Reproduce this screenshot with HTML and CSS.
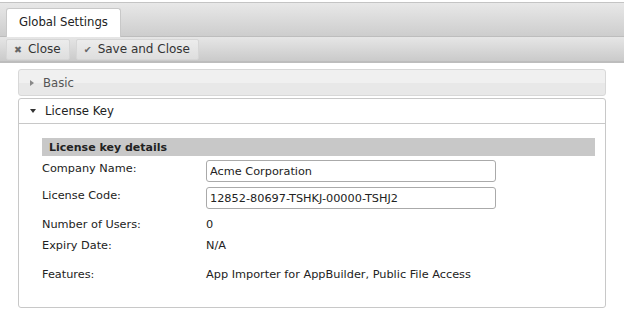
FILE: index.html
```html
<!DOCTYPE html>
<html>
<head>
	<title>Global Settings</title>
	<meta charset="utf-8">
	<link rel="stylesheet" href="styles.css">
</head>
<body>
	<div class="tabbar">
		<div class="tab">Global Settings</div>
	</div>
	<div class="toolbar">
		<button class="tbtn"><span class="ico">&#10006;</span>Close</button>
		<button class="tbtn"><span class="ico">&#10004;</span>Save and Close</button>
	</div>

	<div class="panels">
		<div class="acc acc-closed">
			<span class="arrow-r"></span>Basic
		</div>
		<div class="acc-open">
			<div class="acc-head"><span class="arrow-d"></span>License Key</div>
			<div class="acc-body">
				<div class="section">License key details</div>
				<div class="row row-input">
					<label>Company Name:</label>
					<input type="text" value="Acme Corporation">
				</div>
				<div class="row row-input">
					<label>License Code:</label>
					<input type="text" value="12852-80697-TSHKJ-00000-TSHJ2">
				</div>
				<div class="row">
					<label>Number of Users:</label>
					<span>0</span>
				</div>
				<div class="row">
					<label>Expiry Date:</label>
					<span>N/A</span>
				</div>
				<div class="row row-feat">
					<label>Features:</label>
					<span>App Importer for AppBuilder, Public File Access</span>
				</div>
			</div>
		</div>
	</div>
</body>
</html>
```
FILE: styles.css
```css
body {
	margin: 0;
	font-family: "DejaVu Sans", Verdana, sans-serif;
	font-size: 11.3px;
	color: #222;
	background: #fff;
}
.tabbar {
	height: 33px;
	margin-top: 2px;
	border-top: 1px solid #c4c4c4;
	background: linear-gradient(#e8e8e8, #cdcdcd);
	display: flex;
	align-items: flex-end;
	padding-left: 6px;
	border-bottom: 1px solid #bdbdbd;
}
.tab {
	background: #fff;
	border: 1px solid #c8c8c8;
	border-bottom: none;
	border-radius: 3px 3px 0 0;
	height: 28px;
	line-height: 26px;
	padding: 0 12px;
	font-size: 11.7px;
	margin-bottom: -1px;
}
.toolbar {
	height: 24px;
	background: linear-gradient(#e6e6e6, #cacaca);
	border-bottom: 2px solid #bdbdbd;
	display: flex;
	align-items: center;
	gap: 6px;
	padding-left: 6px;
}
.tbtn {
	font-family: inherit;
	font-size: 12px;
	color: #333;
	background: linear-gradient(#ececec, #dedede);
	border: 1px solid #d6d6d6;
	border-radius: 2px;
	height: 21px;
	padding: 0 8px 0 7px;
	display: flex;
	align-items: center;
}
.ico {
	color: #666;
	font-size: 9.5px;
	margin-right: 6px;
}
.panels {
	padding: 6px 18px 0 18px;
}
.acc {
	height: 25px;
	line-height: 26px;
	border: 1px solid #d8d8d8;
	border-radius: 3px;
	background: linear-gradient(#f0f0f0 50%, #e8e8e8 50%);
	color: #555;
	padding-left: 11px;
	font-size: 11.7px;
}
.arrow-r {
	display: inline-block;
	width: 0;
	height: 0;
	border-top: 3px solid transparent;
	border-bottom: 3px solid transparent;
	border-left: 4px solid #888;
	margin-right: 9px;
	vertical-align: 1px;
}
.acc-open {
	margin-top: 2px;
	border: 1px solid #c8c8c8;
	border-radius: 3px;
}
.acc-head {
	height: 24px;
	line-height: 24px;
	border-bottom: 1px solid #c8c8c8;
	padding-left: 11px;
	font-size: 11.7px;
}
.arrow-d {
	display: inline-block;
	width: 0;
	height: 0;
	border-left: 3px solid transparent;
	border-right: 3px solid transparent;
	border-top: 4px solid #333;
	margin-right: 9px;
	vertical-align: 2px;
}
.acc-body {
	padding: 14px 10px 22px 23px;
}
.section {
	background: #c8c8c8;
	font-weight: bold;
	font-size: 11px;
	height: 18px;
	line-height: 19px;
	padding-left: 7px;
	margin-bottom: 4px;
}
.row {
	display: flex;
	align-items: center;
	height: 21px;
}
.row-input {
	height: 27px;
	align-items: flex-start;
}
.row-input label {
	padding-top: 2px;
}
.row label {
	width: 164px;
}
.row input {
	font-family: inherit;
	font-size: 11.3px;
	width: 290px;
	height: 22px;
	padding: 0 3px;
	border: 1px solid #aaa;
	border-radius: 3px;
	box-sizing: border-box;
	color: #222;
}
.row-feat {
	margin-top: 8px;
}
```
